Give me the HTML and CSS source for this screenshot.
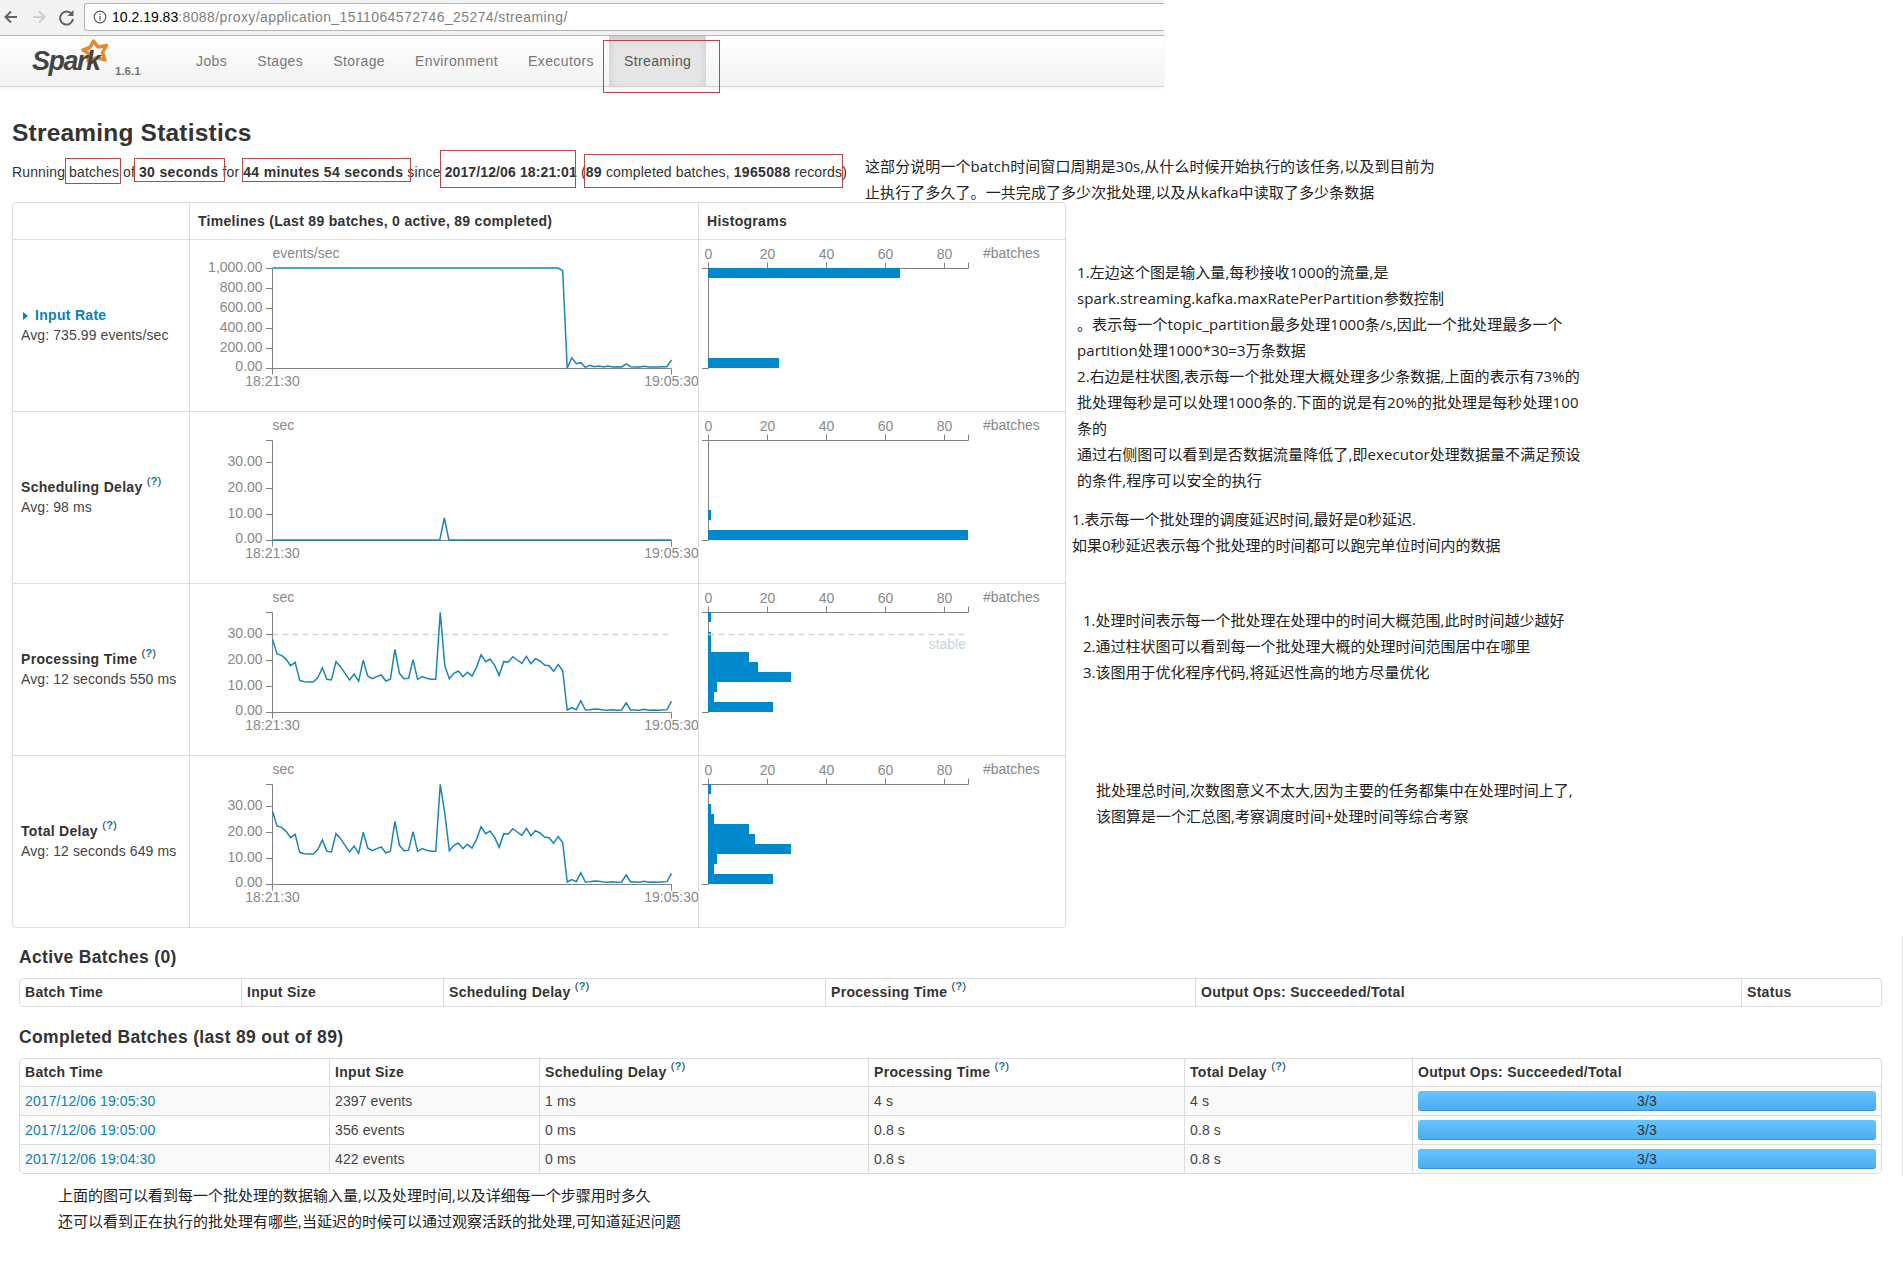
FILE: index.html
```html
<!DOCTYPE html>
<html>
<head>
	<meta charset="utf-8">
	<title>Streaming Statistics</title>
	<link rel="stylesheet" href="styles.css">
</head>
<body>
<div class="page">
	<!-- browser toolbar -->
	<div class="toolbar">
		<svg class="toolbar-icons" width="80" height="30" viewBox="0 0 80 30">
			<path class="ico-back" d="M15 16H4M9 10.500L3.500 16L9 21.500"/>
			<path class="ico-fwd" d="M31 16H42M37 10.500L42.500 16L37 21.500"/>
			<path class="ico-reload" d="M70 13.500A6.500 6.500 0 1 0 71 18"/>
			<path class="ico-reload-head" d="M71.500 9V15H65.500Z"/>
		</svg>
		<div class="address">
			<svg width="14" height="14" viewBox="0 0 14 14">
				<circle class="ico-info" cx="7" cy="7" r="5.800"/>
				<path class="ico-info" d="M7 6V10.500M7 3.500V5"/>
			</svg>
			<span class="host">10.2.19.83</span><span class="path">:8088/proxy/application_1511064572746_25274/streaming/</span>
		</div>
	</div>

	<!-- spark nav -->
	<div class="navbar">
		<div class="brand">
			<svg class="star" width="34" height="32" viewBox="0 0 34 32">
				<path class="star-shape" d="M15.500 4L20 10L28.500 8.500L24.500 15.500L27 23L18.500 20.500L10 24L11.500 17L5 13L12 10.500Z"/>
			</svg>
			<span class="logo-text">Spark</span>
			<span class="version">1.6.1</span>
		</div>
		<ul class="nav">
			<li>Jobs</li>
			<li>Stages</li>
			<li>Storage</li>
			<li>Environment</li>
			<li>Executors</li>
			<li class="active">Streaming</li>
		</ul>
	</div>

	<h3 class="title">Streaming Statistics</h3>
	<p class="summary">Running batches of <b>30 seconds</b> for <b>44 minutes 54 seconds</b> since <b class="start-date">2017/12/06 18:21:01</b> (<b>89</b> completed batches, <b>1965088</b> records)</p>

	<table class="stats">
		<tr>
			<th></th>
			<th>Timelines (Last 89 batches, 0 active, 89 completed)</th>
			<th>Histograms</th>
		</tr>

		<tr>
			<td class="metric">
				<div class="metric-name link"><span class="arrow"></span>Input Rate</div>
				<div>Avg: 735.99 events/sec</div>
			</td>
			<td class="chart">
				<svg class="timeline" viewBox="0 0 508 171">
					<text x="82.500" y="18">events/sec</text>
					<path class="axis" d="M76 28.500H82.500V128.500H481.500V134.500M82.500 128.500V134.500M76 48.500H82.500M76 68.500H82.500M76 88.500H82.500M76 108.500H82.500M76 128.500H82.500"/>
					<text class="r" x="72.600" y="32">1,000.00</text>
					<text class="r" x="72.600" y="52">800.00</text>
					<text class="r" x="72.600" y="72">600.00</text>
					<text class="r" x="72.600" y="92">400.00</text>
					<text class="r" x="72.600" y="112">200.00</text>
					<text class="r" x="72.600" y="131">0.00</text>
					<text class="c" x="82.500" y="146">18:21:30</text>
					<text class="c" x="481.500" y="146">19:05:30</text>
					<polyline class="line" transform="translate(82.500,-50) scale(4.534,0.3333)" points="0,234 63,234 64,242 65,535 66,503 67,521 68,518 69,532 70,526 71,530 72,528 73,531 74,528 75,531 76,530 77,531 78,522 79,530 80,531 81,531 82,529 83,531 84,531 85,531 86,530 87,530 88,510"/>
				</svg>
			</td>
			<td class="chart">
				<svg class="histogram" viewBox="0 0 366 171">
					<text class="c" x="9.500" y="19">0</text>
					<text class="c" x="68.500" y="19">20</text>
					<text class="c" x="127.500" y="19">40</text>
					<text class="c" x="186.500" y="19">60</text>
					<text class="c" x="245.500" y="19">80</text>
					<text x="284" y="18">#batches</text>
					<path class="axis" d="M3 28.500H269.500V22.500M9.500 22.500V128.500H3M68.500 22.500V28.500M127.500 22.500V28.500M186.500 22.500V28.500M245.500 22.500V28.500"/>
					<rect class="bar" x="9" y="28" width="192" height="10"/>
					<rect class="bar" x="9" y="118" width="71" height="10"/>
				</svg>
			</td>
		</tr>

		<tr>
			<td class="metric">
				<div class="metric-name">Scheduling Delay <sup>(<a>?</a>)</sup></div>
				<div>Avg: 98 ms</div>
			</td>
			<td class="chart">
				<svg class="timeline" viewBox="0 0 508 171">
					<text x="82.500" y="18">sec</text>
					<path class="axis" d="M76 28.500H82.500V128.500H481.500V134.500M82.500 128.500V134.500M76 50.500H82.500M76 76.500H82.500M76 102.500H82.500M76 128.500H82.500"/>
					<text class="r" x="72.600" y="54">30.00</text>
					<text class="r" x="72.600" y="80">20.00</text>
					<text class="r" x="72.600" y="106">10.00</text>
					<text class="r" x="72.600" y="131">0.00</text>
					<text class="c" x="82.500" y="146">18:21:30</text>
					<text class="c" x="481.500" y="146">19:05:30</text>
					<polyline class="line" points="82.500,128 249.800,128 254.300,106 258.900,128 481.500,128"/>
				</svg>
			</td>
			<td class="chart">
				<svg class="histogram" viewBox="0 0 366 171">
					<text class="c" x="9.500" y="19">0</text>
					<text class="c" x="68.500" y="19">20</text>
					<text class="c" x="127.500" y="19">40</text>
					<text class="c" x="186.500" y="19">60</text>
					<text class="c" x="245.500" y="19">80</text>
					<text x="284" y="18">#batches</text>
					<path class="axis" d="M3 28.500H269.500V22.500M9.500 22.500V128.500H3M68.500 22.500V28.500M127.500 22.500V28.500M186.500 22.500V28.500M245.500 22.500V28.500"/>
					<rect class="bar" x="9" y="98" width="3" height="10"/>
					<rect class="bar" x="9" y="118" width="260" height="10"/>
				</svg>
			</td>
		</tr>

		<tr>
			<td class="metric">
				<div class="metric-name">Processing Time <sup>(<a>?</a>)</sup></div>
				<div>Avg: 12 seconds 550 ms</div>
			</td>
			<td class="chart">
				<svg class="timeline" viewBox="0 0 508 171">
					<text x="82.500" y="18">sec</text>
					<path class="dash" d="M82.500 50.500H481.500"/>
					<path class="axis" d="M76 28.500H82.500V128.500H481.500V134.500M82.500 128.500V134.500M76 50.500H82.500M76 76.500H82.500M76 102.500H82.500M76 128.500H82.500"/>
					<text class="r" x="72.600" y="54">30.00</text>
					<text class="r" x="72.600" y="80">20.00</text>
					<text class="r" x="72.600" y="106">10.00</text>
					<text class="r" x="72.600" y="131">0.00</text>
					<text class="c" x="82.500" y="146">18:21:30</text>
					<text class="c" x="481.500" y="146">19:05:30</text>
					<polyline class="line" transform="translate(82.500,-4) scale(4.534,0.3333)" points="0,178 1,222 2,226 3,238 4,257 5,247 6,301 7,305 8,306 9,306 10,293 11,264 12,298 13,300 14,245 15,260 16,280 17,300 18,282 19,304 20,241 21,288 22,296 23,290 24,285 25,303 26,298 27,208 28,280 29,296 30,295 31,239 32,298 33,290 34,295 35,298 36,298 37,97 38,257 39,296 40,280 41,273 42,290 43,277 44,288 45,262 46,224 47,245 48,237 49,256 50,286 51,245 52,246 53,230 54,240 55,250 56,229 57,251 58,236 59,243 60,255 61,257 62,274 63,254 64,272 65,390 66,383 67,389 68,362 69,390 70,389 71,387 72,388 73,390 74,391 75,389 76,391 77,390 78,369 79,390 80,390 81,391 82,388 83,391 84,390 85,391 86,390 87,389 88,364"/>
				</svg>
			</td>
			<td class="chart">
				<svg class="histogram" viewBox="0 0 366 171">
					<text class="c" x="9.500" y="19">0</text>
					<text class="c" x="68.500" y="19">20</text>
					<text class="c" x="127.500" y="19">40</text>
					<text class="c" x="186.500" y="19">60</text>
					<text class="c" x="245.500" y="19">80</text>
					<text x="284" y="18">#batches</text>
					<path class="axis" d="M3 28.500H269.500V22.500M9.500 22.500V128.500H3M68.500 22.500V28.500M127.500 22.500V28.500M186.500 22.500V28.500M245.500 22.500V28.500"/>
					<rect class="bar" x="9" y="28" width="3" height="10"/>
					<rect class="bar" x="9" y="48" width="3" height="20"/>
					<rect class="bar" x="9" y="68" width="41" height="10"/>
					<rect class="bar" x="9" y="78" width="50" height="10"/>
					<rect class="bar" x="9" y="88" width="83" height="10"/>
					<rect class="bar" x="9" y="98" width="9" height="10"/>
					<rect class="bar" x="9" y="108" width="6" height="10"/>
					<rect class="bar" x="9" y="118" width="65" height="10"/>
					<path class="dash" d="M9.500 50.500H267"/>
					<text class="r stable" x="267" y="65">stable</text>
				</svg>
			</td>
		</tr>

		<tr>
			<td class="metric">
				<div class="metric-name">Total Delay <sup>(<a>?</a>)</sup></div>
				<div>Avg: 12 seconds 649 ms</div>
			</td>
			<td class="chart">
				<svg class="timeline" viewBox="0 0 508 171">
					<text x="82.500" y="18">sec</text>
					<path class="axis" d="M76 28.500H82.500V128.500H481.500V134.500M82.500 128.500V134.500M76 50.500H82.500M76 76.500H82.500M76 102.500H82.500M76 128.500H82.500"/>
					<text class="r" x="72.600" y="54">30.00</text>
					<text class="r" x="72.600" y="80">20.00</text>
					<text class="r" x="72.600" y="106">10.00</text>
					<text class="r" x="72.600" y="131">0.00</text>
					<text class="c" x="82.500" y="146">18:21:30</text>
					<text class="c" x="481.500" y="146">19:05:30</text>
					<polyline class="line" transform="translate(82.500,-4) scale(4.534,0.3333)" points="0,178 1,222 2,226 3,238 4,257 5,247 6,301 7,305 8,306 9,306 10,293 11,264 12,298 13,300 14,245 15,260 16,280 17,300 18,282 19,304 20,241 21,288 22,296 23,290 24,285 25,303 26,298 27,208 28,280 29,296 30,295 31,239 32,298 33,290 34,295 35,298 36,298 37,97 38,184 39,296 40,280 41,273 42,290 43,277 44,288 45,262 46,224 47,245 48,237 49,256 50,286 51,245 52,246 53,230 54,240 55,250 56,229 57,251 58,236 59,243 60,255 61,257 62,274 63,254 64,272 65,390 66,383 67,389 68,362 69,390 70,389 71,387 72,388 73,390 74,391 75,389 76,391 77,390 78,369 79,390 80,390 81,391 82,388 83,391 84,390 85,391 86,390 87,389 88,364"/>
				</svg>
			</td>
			<td class="chart">
				<svg class="histogram" viewBox="0 0 366 171">
					<text class="c" x="9.500" y="19">0</text>
					<text class="c" x="68.500" y="19">20</text>
					<text class="c" x="127.500" y="19">40</text>
					<text class="c" x="186.500" y="19">60</text>
					<text class="c" x="245.500" y="19">80</text>
					<text x="284" y="18">#batches</text>
					<path class="axis" d="M3 28.500H269.500V22.500M9.500 22.500V128.500H3M68.500 22.500V28.500M127.500 22.500V28.500M186.500 22.500V28.500M245.500 22.500V28.500"/>
					<rect class="bar" x="9" y="28" width="3" height="10"/>
					<rect class="bar" x="9" y="48" width="3" height="10"/>
					<rect class="bar" x="9" y="58" width="6" height="10"/>
					<rect class="bar" x="9" y="68" width="41" height="10"/>
					<rect class="bar" x="9" y="78" width="47" height="10"/>
					<rect class="bar" x="9" y="88" width="83" height="10"/>
					<rect class="bar" x="9" y="98" width="9" height="10"/>
					<rect class="bar" x="9" y="108" width="6" height="10"/>
					<rect class="bar" x="9" y="118" width="65" height="10"/>
				</svg>
			</td>
		</tr>
	</table>

	<h4 class="section section-first">Active Batches (0)</h4>
	<table class="batches active-batches">
		<tr>
			<th>Batch Time</th>
			<th>Input Size</th>
			<th>Scheduling Delay <sup>(<a>?</a>)</sup></th>
			<th>Processing Time <sup>(<a>?</a>)</sup></th>
			<th>Output Ops: Succeeded/Total</th>
			<th>Status</th>
		</tr>
	</table>

	<h4 class="section">Completed Batches (last 89 out of 89)</h4>
	<table class="batches completed-batches">
		<tr>
			<th>Batch Time</th>
			<th>Input Size</th>
			<th>Scheduling Delay <sup>(<a>?</a>)</sup></th>
			<th>Processing Time <sup>(<a>?</a>)</sup></th>
			<th>Total Delay <sup>(<a>?</a>)</sup></th>
			<th>Output Ops: Succeeded/Total</th>
		</tr>
		<tr class="odd">
			<td><a class="link">2017/12/06 19:05:30</a></td>
			<td>2397 events</td>
			<td>1 ms</td>
			<td>4 s</td>
			<td>4 s</td>
			<td class="ops"><div class="progress">3/3</div></td>
		</tr>
		<tr>
			<td><a class="link">2017/12/06 19:05:00</a></td>
			<td>356 events</td>
			<td>0 ms</td>
			<td>0.8 s</td>
			<td>0.8 s</td>
			<td class="ops"><div class="progress">3/3</div></td>
		</tr>
		<tr class="odd">
			<td><a class="link">2017/12/06 19:04:30</a></td>
			<td>422 events</td>
			<td>0 ms</td>
			<td>0.8 s</td>
			<td>0.8 s</td>
			<td class="ops"><div class="progress">3/3</div></td>
		</tr>
	</table>

	<!-- red boxes drawn over the screenshot -->
	<div class="mark mark-tab"></div>
	<div class="mark mark-batches"></div>
	<div class="mark mark-interval"></div>
	<div class="mark mark-uptime"></div>
	<div class="mark mark-start"></div>
	<div class="mark mark-records"></div>

	<!-- notes written over the screenshot -->
	<div class="note note-top">这部分说明一个batch时间窗口周期是30s,从什么时候开始执行的该任务,以及到目前为<br>止执行了多久了。一共完成了多少次批处理,以及从kafka中读取了多少条数据</div>
	<div class="note note-input">1.左边这个图是输入量,每秒接收1000的流量,是<br>spark.streaming.kafka.maxRatePerPartition参数控制<br>。表示每一个topic_partition最多处理1000条/s,因此一个批处理最多一个<br>partition处理1000*30=3万条数据<br>2.右边是柱状图,表示每一个批处理大概处理多少条数据,上面的表示有73%的<br>批处理每秒是可以处理1000条的.下面的说是有20%的批处理是每秒处理100<br>条的<br>通过右侧图可以看到是否数据流量降低了,即executor处理数据量不满足预设<br>的条件,程序可以安全的执行</div>
	<div class="note note-delay">1.表示每一个批处理的调度延迟时间,最好是0秒延迟.<br>如果0秒延迟表示每个批处理的时间都可以跑完单位时间内的数据</div>
	<div class="note note-process">1.处理时间表示每一个批处理在处理中的时间大概范围,此时时间越少越好<br>2.通过柱状图可以看到每一个批处理大概的处理时间范围居中在哪里<br>3.该图用于优化程序代码,将延迟性高的地方尽量优化</div>
	<div class="note note-total">批处理总时间,次数图意义不太大,因为主要的任务都集中在处理时间上了,<br>该图算是一个汇总图,考察调度时间+处理时间等综合考察</div>
	<div class="note note-bottom">上面的图可以看到每一个批处理的数据输入量,以及处理时间,以及详细每一个步骤用时多久<br>还可以看到正在执行的批处理有哪些,当延迟的时候可以通过观察活跃的批处理,可知道延迟问题</div>
	<div class="edge"></div>
</div>
</body>
</html>
```

FILE: styles.css
```css
* {
	box-sizing: border-box;
}
html, body {
	margin: 0;
	background: #fff;
}
body {
	font-family: "Liberation Sans", Arial, sans-serif;
	font-size: 14px;
	line-height: 20px;
	color: #333;
}
.page {
	position: relative;
	height: 1277px;
	overflow: hidden;
}

/* browser toolbar */
.toolbar {
	display: flex;
	width: 1164px;
	height: 36px;
	background: #f2f2f2;
	border-bottom: 1px solid #b8b8b8;
	padding-top: 3px;
}
.toolbar-icons {
	width: 84px;
	margin-top: -2px;
	flex: none;
}
.ico-back, .ico-fwd {
	fill: none;
	stroke-width: 2;
}
.ico-back {
	stroke: #5f6368;
}
.ico-fwd {
	stroke: #cfcfcf;
}
.ico-reload {
	fill: none;
	stroke: #5f6368;
	stroke-width: 2;
}
.ico-reload-head {
	fill: #5f6368;
}
.address {
	flex: 1;
	height: 28px;
	display: flex;
	align-items: center;
	gap: 5px;
	padding-left: 8px;
	background: #fff;
	border: 1px solid #b5b5b5;
	border-right: none;
	border-radius: 3px 0 0 3px;
	white-space: nowrap;
}
.address .path {
	margin-left: -5px;
	color: #808080;
	letter-spacing: 0.400px;
}
.host {
	color: #000;
}
.ico-info {
	fill: none;
	stroke: #555;
	stroke-width: 1.200;
}

/* spark navbar */
.navbar {
	display: flex;
	width: 1164px;
	height: 51px;
	background: linear-gradient(to bottom, #fff, #f2f2f2);
	border-bottom: 1px solid #d4d4d4;
	box-shadow: 0 1px 3px rgba(0,0,0,0.06);
}
.brand {
	position: relative;
	width: 181px;
	flex: none;
}
.star {
	position: absolute;
	left: 78px;
	top: 1px;
}
.star-shape {
	fill: #fff;
	stroke: #e38a2e;
	stroke-width: 3.500;
	stroke-linejoin: round;
}
.logo-text {
	position: absolute;
	left: 32px;
	top: 8px;
	font-size: 27px;
	line-height: 34px;
	font-weight: bold;
	font-style: italic;
	letter-spacing: -1.500px;
	color: #444;
}
.version {
	position: absolute;
	left: 115px;
	top: 25px;
	font-size: 11.500px;
	font-weight: bold;
	color: #777;
}
.nav {
	display: flex;
	margin: 0;
	padding: 0;
	list-style: none;
}
.nav li {
	padding: 15px 15px 0;
	color: #777;
	letter-spacing: 0.400px;
}
.nav li.active {
	background: #e5e5e5;
	box-shadow: inset 0 3px 8px rgba(0,0,0,0.125);
	color: #555;
}

/* page head */
.title {
	margin: 31px 0 0 12px;
	font-size: 24.500px;
	line-height: 30px;
	font-weight: bold;
	letter-spacing: 0.200px;
	color: #333;
}
.summary {
	margin: 14px 0 0 12px;
	letter-spacing: 0.130px;
	white-space: nowrap;
}
b {
	letter-spacing: 0.320px;
}
b.start-date {
	letter-spacing: 0.120px;
}
th, .metric-name {
	letter-spacing: 0.300px;
}

/* stats table */
table {
	border-collapse: separate;
	border-spacing: 0;
	table-layout: fixed;
	border: 1px solid #ddd;
	border-radius: 4px;
	background: #fff;
}
td {
	letter-spacing: 0.100px;
	color: #444;
}
th {
	text-align: left;
	font-weight: bold;
	vertical-align: middle;
}
sup {
	font-size: 11.500px;
	line-height: 0;
	font-weight: normal;
	letter-spacing: 0;
	position: relative;
	top: -7px;
	vertical-align: baseline;
}
sup a {
	color: #0b7fb0;
	font-weight: bold;
}
.stats {
	width: 1054px;
	margin: 20px 0 0 12px;
}
.stats th {
	padding: 8px;
	height: 36px;
}
.stats th + th, .stats td + td {
	border-left: 1px solid #ddd;
}
.stats td {
	border-top: 1px solid #ddd;
}
.stats th:nth-child(1) {
	width: 176px;
}
.stats th:nth-child(2) {
	width: 509px;
}
.stats th:nth-child(3) {
	width: 367px;
}
.metric {
	padding: 0 8px 2px;
	vertical-align: middle;
}
.metric-name {
	font-weight: bold;
	color: #333;
}
.metric-name.link, .link {
	color: #0a81b3;
}
.metric .arrow {
	display: inline-block;
	width: 0;
	height: 0;
	margin: 0 7px 0 2px;
	border-left: 5px solid #0a81b3;
	border-top: 4px solid transparent;
	border-bottom: 4px solid transparent;
}
.chart {
	padding: 0;
}
.chart svg {
	display: block;
	height: 171px;
}
.timeline {
	width: 508px;
}
.histogram {
	width: 366px;
}
svg text {
	font-size: 14px;
	fill: #888;
	letter-spacing: 0;
}
svg text.r {
	text-anchor: end;
}
svg text.c {
	text-anchor: middle;
}
svg text.stable {
	fill: #c6d4dc;
}
.axis {
	fill: none;
	stroke: #808080;
	stroke-width: 1;
}
.line {
	fill: none;
	stroke: #1b85b8;
	stroke-width: 1.500;
	vector-effect: non-scaling-stroke;
}
.bar {
	fill: #0088cc;
}
.dash {
	fill: none;
	stroke: #c5d7e2;
	stroke-width: 1.500;
	stroke-dasharray: 6 4;
}

/* batch tables */
.section {
	margin: 20px 0 0 19px;
	font-size: 17.500px;
	line-height: 20px;
	font-weight: bold;
	letter-spacing: 0.330px;
}
.section-first {
	margin-top: 19px;
}
.batches {
	width: 1863px;
	margin: 11px 0 0 19px;
}
.batches th {
	padding: 3px 5px 4px;
	height: 27px;
}
.batches td {
	padding: 4px 5px;
	height: 29px;
	border-top: 1px solid #ddd;
}
.batches th + th, .batches td + td {
	border-left: 1px solid #ddd;
}
.batches .odd td {
	background: #f9f9f9;
}
.active-batches th:nth-child(1) {
	width: 221px;
}
.active-batches th:nth-child(2) {
	width: 202px;
}
.active-batches th:nth-child(3) {
	width: 382px;
}
.active-batches th:nth-child(4) {
	width: 370px;
}
.active-batches th:nth-child(5) {
	width: 546px;
}
.active-batches th:nth-child(6) {
	width: 140px;
}
.completed-batches th:nth-child(1) {
	width: 309px;
}
.completed-batches th:nth-child(2) {
	width: 210px;
}
.completed-batches th:nth-child(3) {
	width: 329px;
}
.completed-batches th:nth-child(4) {
	width: 316px;
}
.completed-batches th:nth-child(5) {
	width: 228px;
}
.completed-batches th:nth-child(6) {
	width: 469px;
}
.progress {
	height: 20px;
	text-align: center;
	border-radius: 3px;
	background: linear-gradient(to bottom, #64c5ff, #4eadee);
	border-bottom: 1px solid #3f8fce;
	line-height: 20px;
	color: #333;
}

/* red boxes */
.mark {
	position: absolute;
	border: 1px solid #b5494a;
}
.mark-tab {
	left: 603px;
	top: 40px;
	width: 117px;
	height: 53px;
}
.mark-batches {
	left: 65px;
	top: 158px;
	width: 56px;
	height: 26px;
}
.mark-interval {
	left: 134px;
	top: 158px;
	width: 91px;
	height: 24px;
}
.mark-uptime {
	left: 242px;
	top: 158px;
	width: 169px;
	height: 24px;
}
.mark-start {
	left: 440px;
	top: 150px;
	width: 136px;
	height: 38px;
}
.mark-records {
	left: 584px;
	top: 154px;
	width: 259px;
	height: 34px;
}

/* handwritten notes */
.note {
	position: absolute;
	font-family: "Open Sans", "Noto Sans CJK SC", sans-serif;
	font-size: 15px;
	line-height: 26px;
	color: #222;
	white-space: nowrap;
}
.note-top {
	left: 865px;
	top: 153px;
	letter-spacing: 0.080px;
}
.note-input {
	left: 1077px;
	top: 259px;
	letter-spacing: 0.080px;
}
.note-delay {
	left: 1072px;
	top: 506px;
}
.note-process {
	left: 1083px;
	top: 607px;
}
.note-total {
	left: 1096px;
	top: 777px;
}
.note-bottom {
	left: 58px;
	top: 1182px;
}

/* faint line left at the right edge of the capture */
.edge {
	position: absolute;
	left: 1902px;
	top: 936px;
	width: 1px;
	height: 240px;
	background: #e8e8e8;
}
```
